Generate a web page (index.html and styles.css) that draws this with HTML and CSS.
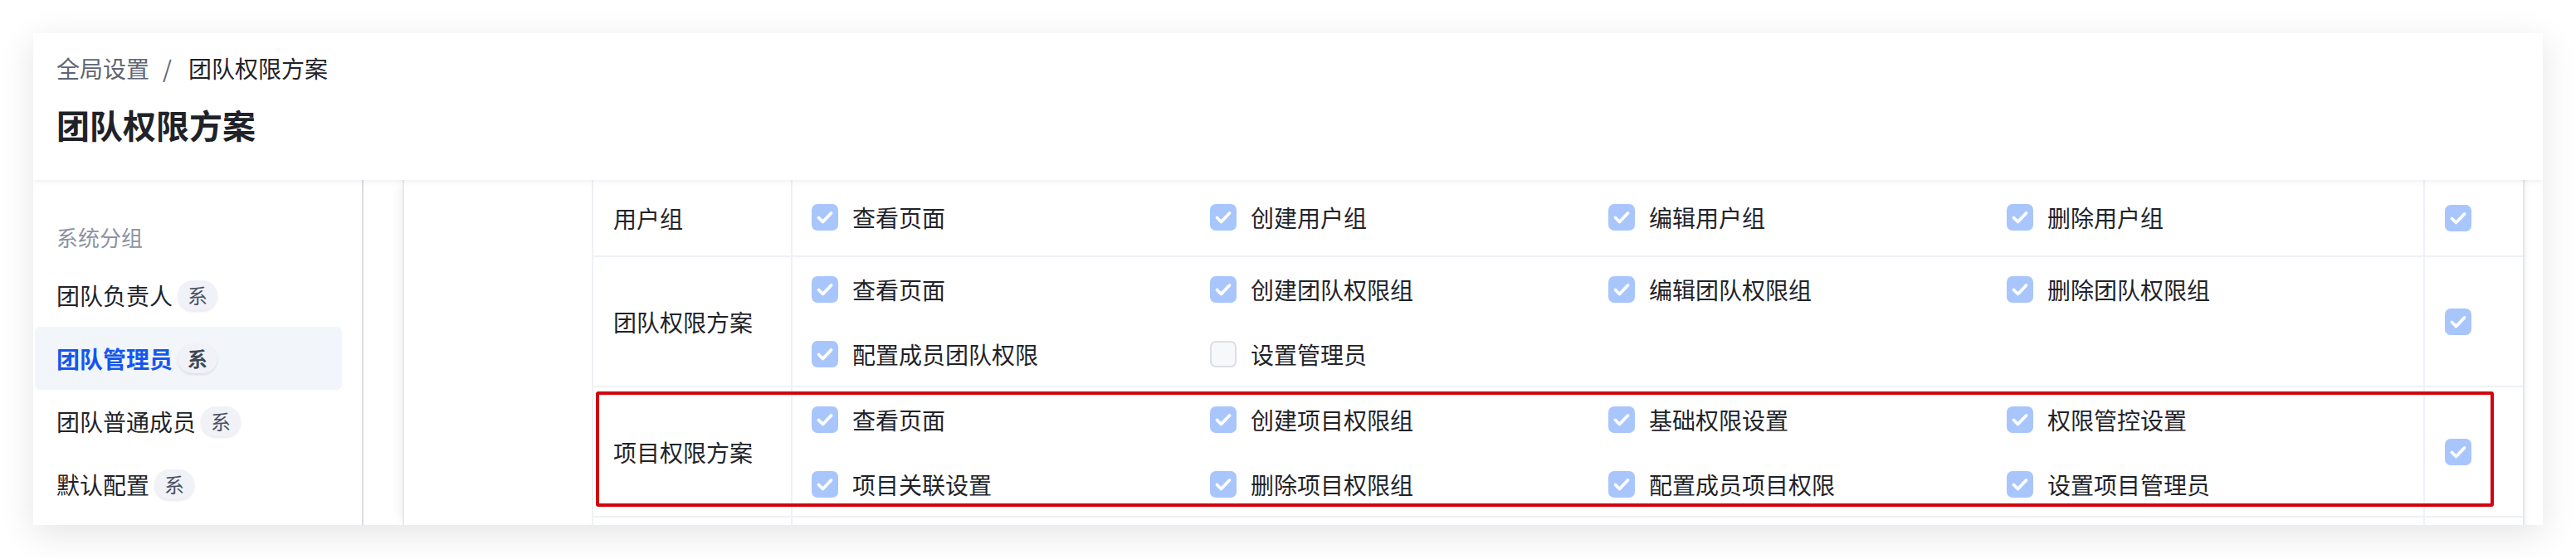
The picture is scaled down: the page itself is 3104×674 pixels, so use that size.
FILE: index.html
```html
<!DOCTYPE html>
<html lang="zh-CN">
<head>
<meta charset="utf-8">
<title>团队权限方案</title>
<link rel="stylesheet" href="styles.css">
</head>
<body>
<div class="card">
  <header class="page-header">
    <nav class="breadcrumb">
      <span class="crumb crumb-muted">全局设置</span>
      <span class="sep">/</span>
      <span class="crumb">团队权限方案</span>
    </nav>
    <h1 class="title">团队权限方案</h1>
  </header>
  <div class="main">
    <aside class="sidebar">
      <div class="group-title">系统分组</div>
      <ul class="menu">
        <li class="menu-item"><span>团队负责人</span><span class="tag">系</span></li>
        <li class="menu-item active"><span>团队管理员</span><span class="tag">系</span></li>
        <li class="menu-item"><span>团队普通成员</span><span class="tag">系</span></li>
        <li class="menu-item"><span>默认配置</span><span class="tag">系</span></li>
      </ul>
    </aside>
    <section class="panel">
      <div class="spacer"></div>
      <div class="table">
        <div class="row row-first">
          <div class="cell-label">用户组</div>
          <div class="cell-perms">
            <label class="perm"><span class="cb on"><svg viewBox="0 0 32 32"><polyline points="8.5,16.5 13.5,21.5 23.5,11"/></svg></span>查看页面</label>
            <label class="perm"><span class="cb on"><svg viewBox="0 0 32 32"><polyline points="8.5,16.5 13.5,21.5 23.5,11"/></svg></span>创建用户组</label>
            <label class="perm"><span class="cb on"><svg viewBox="0 0 32 32"><polyline points="8.5,16.5 13.5,21.5 23.5,11"/></svg></span>编辑用户组</label>
            <label class="perm"><span class="cb on"><svg viewBox="0 0 32 32"><polyline points="8.5,16.5 13.5,21.5 23.5,11"/></svg></span>删除用户组</label>
          </div>
          <div class="cell-all"><span class="cb on"><svg viewBox="0 0 32 32"><polyline points="8.5,16.5 13.5,21.5 23.5,11"/></svg></span></div>
        </div>
        <div class="row">
          <div class="cell-label">团队权限方案</div>
          <div class="cell-perms">
            <label class="perm"><span class="cb on"><svg viewBox="0 0 32 32"><polyline points="8.5,16.5 13.5,21.5 23.5,11"/></svg></span>查看页面</label>
            <label class="perm"><span class="cb on"><svg viewBox="0 0 32 32"><polyline points="8.5,16.5 13.5,21.5 23.5,11"/></svg></span>创建团队权限组</label>
            <label class="perm"><span class="cb on"><svg viewBox="0 0 32 32"><polyline points="8.5,16.5 13.5,21.5 23.5,11"/></svg></span>编辑团队权限组</label>
            <label class="perm"><span class="cb on"><svg viewBox="0 0 32 32"><polyline points="8.5,16.5 13.5,21.5 23.5,11"/></svg></span>删除团队权限组</label>
            <label class="perm"><span class="cb on"><svg viewBox="0 0 32 32"><polyline points="8.5,16.5 13.5,21.5 23.5,11"/></svg></span>配置成员团队权限</label>
            <label class="perm"><span class="cb off"></span>设置管理员</label>
          </div>
          <div class="cell-all"><span class="cb on"><svg viewBox="0 0 32 32"><polyline points="8.5,16.5 13.5,21.5 23.5,11"/></svg></span></div>
        </div>
        <div class="row row-marked">
          <div class="cell-label">项目权限方案</div>
          <div class="cell-perms">
            <label class="perm"><span class="cb on"><svg viewBox="0 0 32 32"><polyline points="8.5,16.5 13.5,21.5 23.5,11"/></svg></span>查看页面</label>
            <label class="perm"><span class="cb on"><svg viewBox="0 0 32 32"><polyline points="8.5,16.5 13.5,21.5 23.5,11"/></svg></span>创建项目权限组</label>
            <label class="perm"><span class="cb on"><svg viewBox="0 0 32 32"><polyline points="8.5,16.5 13.5,21.5 23.5,11"/></svg></span>基础权限设置</label>
            <label class="perm"><span class="cb on"><svg viewBox="0 0 32 32"><polyline points="8.5,16.5 13.5,21.5 23.5,11"/></svg></span>权限管控设置</label>
            <label class="perm"><span class="cb on"><svg viewBox="0 0 32 32"><polyline points="8.5,16.5 13.5,21.5 23.5,11"/></svg></span>项目关联设置</label>
            <label class="perm"><span class="cb on"><svg viewBox="0 0 32 32"><polyline points="8.5,16.5 13.5,21.5 23.5,11"/></svg></span>删除项目权限组</label>
            <label class="perm"><span class="cb on"><svg viewBox="0 0 32 32"><polyline points="8.5,16.5 13.5,21.5 23.5,11"/></svg></span>配置成员项目权限</label>
            <label class="perm"><span class="cb on"><svg viewBox="0 0 32 32"><polyline points="8.5,16.5 13.5,21.5 23.5,11"/></svg></span>设置项目管理员</label>
          </div>
          <div class="cell-all"><span class="cb on"><svg viewBox="0 0 32 32"><polyline points="8.5,16.5 13.5,21.5 23.5,11"/></svg></span></div>
          <div class="highlight"></div>
        </div>
        <div class="row row-empty">
          <div class="cell-label"></div>
          <div class="cell-perms"></div>
          <div class="cell-all"></div>
        </div>
      </div>
      <div class="strip"></div>
    </section>
  </div>
</div>
</body>
</html>
```
FILE: styles.css
```css
* { box-sizing: border-box; }

html, body {
  margin: 0;
  background: #ffffff;
}

body {
  padding: 40px;
  font-family: "Noto Sans CJK SC", "Noto Sans", sans-serif;
  color: #1f2329;
}

.card {
  width: 3024px;
  height: 593px;
  background: #ffffff;
  box-shadow: 0 10px 40px rgba(0, 0, 0, 0.11);
  overflow: hidden;
  display: flex;
  flex-direction: column;
}

/* header */
.page-header {
  position: relative;
  z-index: 2;
  height: 177px;
  flex: none;
  padding: 22px 28px 0;
  background: #ffffff;
  box-shadow: 0 2px 6px rgba(20, 30, 60, 0.07);
}

.breadcrumb {
  display: flex;
  align-items: center;
  height: 40px;
  font-size: 28px;
  line-height: 40px;
  color: #1f2329;
}

.crumb-muted { color: #5e6573; }

.sep {
  color: #5e6573;
  margin: 0 20px 0 16px;
}

.title {
  margin: 20px 0 0;
  font-size: 40px;
  line-height: 56px;
  font-weight: 700;
  color: #1f2329;
}

/* main */
.main {
  flex: 1;
  display: flex;
  min-height: 0;
}

.sidebar {
  width: 398px;
  flex: none;
  border-right: 2px solid #d9dce4;
  padding-top: 49px;
}

.group-title {
  padding-left: 28px;
  font-size: 26px;
  line-height: 40px;
  color: #8c93a1;
  margin-bottom: 12px;
}

.menu {
  list-style: none;
  margin: 0;
  padding: 0;
}

.menu-item {
  height: 76px;
  margin: 0 24px 0 2px;
  padding-left: 26px;
  display: flex;
  align-items: center;
  font-size: 28px;
  color: #1f2329;
  border-radius: 6px;
}

.menu-item.active {
  background: #f2f5fa;
  color: #1456f0;
  font-weight: 700;
}

.tag {
  margin-left: 6px;
  height: 36px;
  padding: 0 12px;
  border-radius: 18px;
  background: #f0f2f7;
  color: #4b5263;
  font-size: 24px;
  line-height: 36px;
  box-shadow: 0 2px 3px rgba(0, 0, 0, 0.09);
}

.menu-item.active .tag { color: #3f4656; }

/* panel & table */
.panel {
  flex: 1;
  display: flex;
  margin-left: 47px;
  border-left: 2px solid #e6e9ef;
  box-shadow: -8px 0 12px -6px rgba(20, 30, 60, 0.07);
}

.spacer {
  width: 226px;
  flex: none;
}

.table {
  flex: 1;
  border-left: 2px solid #eef1f6;
}

.row {
  position: relative;
  display: grid;
  grid-template-columns: 240px 1fr 118px;
  border-bottom: 2px solid #eef1f6;
  font-size: 28px;
}

.cell-label {
  display: flex;
  align-items: center;
  padding-left: 24px;
  border-right: 2px solid #eef1f6;
  color: #1f2329;
}

.cell-perms {
  display: grid;
  grid-template-columns: repeat(4, 1fr);
  row-gap: 34px;
  padding: 17px 22px 16px 23px;
  border-right: 2px solid #eef1f6;
}

.row-first .cell-perms {
  padding-top: 23px;
  padding-bottom: 24px;
}

.row-empty { height: 90px; }

.cell-all {
  display: flex;
  align-items: center;
  padding-left: 24px;
}

.perm {
  display: flex;
  align-items: center;
  gap: 17px;
  height: 44px;
  line-height: 44px;
  color: #1f2329;
  white-space: nowrap;
}

.cb {
  width: 32px;
  height: 32px;
  flex: none;
  border-radius: 7px;
  display: block;
}

.cb.on { background: #a8c6fc; }

.cb.off {
  background: #f7f8fa;
  border: 2px solid #dcdfe5;
}

.cb svg {
  width: 32px;
  height: 32px;
  display: block;
}

.cb svg polyline {
  fill: none;
  stroke: #ffffff;
  stroke-width: 3.8;
  stroke-linecap: round;
  stroke-linejoin: round;
}

.highlight {
  position: absolute;
  top: 5px;
  left: 3px;
  width: 2287px;
  height: 139px;
  border: 4px solid #d3020f;
  border-radius: 3px;
  pointer-events: none;
}

.strip {
  width: 24px;
  flex: none;
  border-left: 2px solid #e4e7ed;
  box-shadow: inset 5px 0 6px -4px rgba(20, 30, 60, 0.06);
}
```
